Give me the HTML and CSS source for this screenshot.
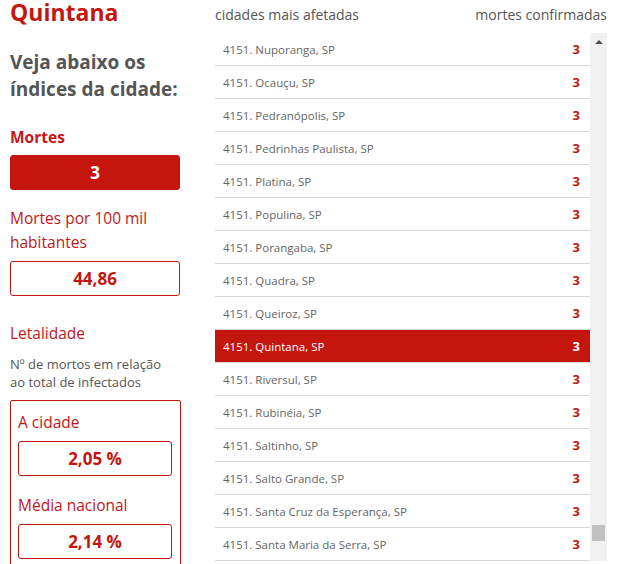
FILE: index.html
```html
<!DOCTYPE html>
<html lang="pt-BR">
<head>
<meta charset="UTF-8">
<meta name="viewport" content="width=device-width, initial-scale=1.0">
<title>Quintana</title>
<link rel="stylesheet" href="styles.css">
</head>
<body>

<div class="page">
    <div class="sidebar">
        <h1 class="city-name">Quintana</h1>
        <h2 class="intro">Veja abaixo os<br>índices da cidade:</h2>

        <div class="stat-label strong">Mortes</div>
        <div class="stat-box filled">3</div>

        <div class="stat-label">Mortes por 100 mil habitantes</div>
        <div class="stat-box">44,86</div>

        <div class="stat-label dark">Letalidade</div>
        <p class="note">Nº de mortos em relação ao total de infectados</p>

        <div class="compare">
            <div class="stat-label">A cidade</div>
            <div class="stat-box">2,05 %</div>
            <div class="stat-label">Média nacional</div>
            <div class="stat-box">2,14 %</div>
        </div>
    </div>

    <div class="ranking">
        <div class="ranking-head">
            <span>cidades mais afetadas</span>
            <span>mortes confirmadas</span>
        </div>
        <div class="ranking-body">
            <ul class="rows">
                <li><span>4151. Nuporanga, SP</span><b>3</b></li>
                <li><span>4151. Ocauçu, SP</span><b>3</b></li>
                <li><span>4151. Pedranópolis, SP</span><b>3</b></li>
                <li><span>4151. Pedrinhas Paulista, SP</span><b>3</b></li>
                <li><span>4151. Platina, SP</span><b>3</b></li>
                <li><span>4151. Populina, SP</span><b>3</b></li>
                <li><span>4151. Porangaba, SP</span><b>3</b></li>
                <li><span>4151. Quadra, SP</span><b>3</b></li>
                <li><span>4151. Queiroz, SP</span><b>3</b></li>
                <li class="current"><span>4151. Quintana, SP</span><b>3</b></li>
                <li><span>4151. Riversul, SP</span><b>3</b></li>
                <li><span>4151. Rubinéia, SP</span><b>3</b></li>
                <li><span>4151. Saltinho, SP</span><b>3</b></li>
                <li><span>4151. Salto Grande, SP</span><b>3</b></li>
                <li><span>4151. Santa Cruz da Esperança, SP</span><b>3</b></li>
                <li><span>4151. Santa Maria da Serra, SP</span><b>3</b></li>
            </ul>
            <div class="scrollbar">
                <span class="arrow"></span>
                <span class="thumb"></span>
            </div>
        </div>
    </div>
</div>

</body>
</html>
```

FILE: styles.css
```css
/* page */
body {
    font-family: "Open Sans", Arial, sans-serif;
    margin: 0;
    padding: 0;
    background-color: #fff;
    color: #555;
    overflow: hidden;
}

.page {
    display: flex;
    align-items: flex-start;
    padding-left: 10px;
    gap: 35px;
}

/* left column */
.sidebar {
    width: 170px;
    flex-shrink: 0;
}

.city-name {
    margin: 0;
    font-size: 23px;
    line-height: 24px;
    font-weight: 700;
    color: #c4160e;
}

.intro {
    margin: 25px -10px 22px 0;
    font-size: 19px;
    line-height: 27px;
    font-weight: 700;
    white-space: nowrap;
    color: #555;
}

.stat-label {
    font-size: 15.5px;
    line-height: 24px;
    color: #c4161c;
    margin-bottom: 7px;
}

.stat-label.strong {
    font-weight: 700;
    margin-bottom: 6px;
}

.stat-label.dark {
    margin-bottom: 10px;
}

.stat-box {
    height: 33px;
    line-height: 33px;
    border: 1px solid #c4160e;
    border-radius: 3px;
    text-align: center;
    font-size: 17px;
    font-weight: 700;
    color: #c4160e;
    margin-bottom: 25px;
}

.stat-box.filled {
    background-color: #c4160e;
    color: #fff;
    margin-bottom: 16px;
}

.note {
    width: 160px;
    margin: 0 0 9px;
    font-size: 13px;
    line-height: 18px;
    color: #555;
}

.compare {
    border: 1px solid #c4160e;
    border-radius: 2px;
    padding: 9px 8px 20px 7px;
    width: 154px;
}

.compare .stat-label {
    margin-bottom: 7px;
}

.compare .stat-box {
    margin-bottom: 17px;
}

/* ranking list */
.ranking {
    width: 392px;
}

.ranking-head {
    display: flex;
    justify-content: space-between;
    height: 33px;
    font-size: 14px;
    line-height: 30px;
    color: #555;
}

.ranking-body {
    display: flex;
}

.rows {
    list-style-type: none;
    margin: 0;
    padding: 0;
    flex: 1;
}

.rows li {
    display: flex;
    justify-content: space-between;
    align-items: center;
    height: 32px;
    border-bottom: 1px solid #d6d6d6;
    padding: 0 10px 0 8px;
    font-size: 11.5px;
    color: #666;
}

.rows li b {
    font-size: 13px;
    color: #c4160e;
}

.rows li.current {
    background-color: #c4160e;
    color: #fff;
}

.rows li.current b {
    color: #fff;
}

.scrollbar {
    width: 17px;
    background-color: #f1f1f1;
    display: flex;
    flex-direction: column;
    align-items: center;
    padding-top: 7px;
}

.arrow {
    width: 0;
    height: 0;
    border-left: 4px solid transparent;
    border-right: 4px solid transparent;
    border-bottom: 4px solid #505050;
}

.thumb {
    width: 13px;
    height: 16px;
    margin-top: 481px;
    background-color: #c1c1c1;
}
```
